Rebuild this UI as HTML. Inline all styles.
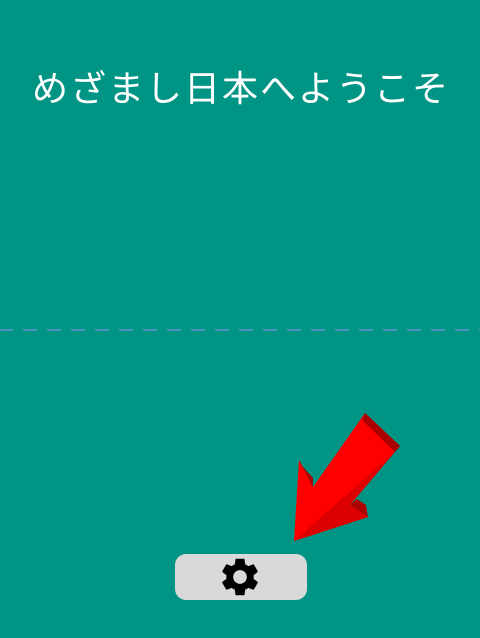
<!DOCTYPE html>
<html><head><meta charset="utf-8"><style>
html,body{margin:0;padding:0;}
body{width:480px;height:638px;background:#009485;position:relative;overflow:hidden;}
.t{position:absolute;left:0;width:480px;top:60px;text-align:center;color:#fff;font:36px "Liberation Sans","Noto Sans CJK JP",sans-serif;letter-spacing:2px;text-indent:2px;}
.dash{position:absolute;left:-1px;top:329px;width:490px;height:2px;background:repeating-linear-gradient(90deg,#4c90bc 0 14px,transparent 14px 24px);}
.btn{position:absolute;left:175px;top:554px;width:132px;height:46px;background:#d9d9d9;border-radius:11px;}
</style></head><body>
<div class="t">めざまし日本へようこそ</div>
<div class="dash"></div>
<svg style="position:absolute;left:0;top:0" width="480" height="638">
<polygon points="294,541 299,460 313,487 365,413 400,446 350,505 368,517" fill="#f00"/>
<polygon points="365,413 400,446 395,452 362,420" fill="#a00"/>
<polygon points="299,460 313,487 313,478 303,467" fill="#a00"/>
<polygon points="350,505 368,517 366,505 357,499" fill="#a00"/>
<polygon points="294,541 395,452 400,446 350,505 368,517" fill="#d00"/>
</svg>
<div class="btn"></div>
<svg style="position:absolute;left:221px;top:558px" width="38" height="38" viewBox="2 2 20 20"><path fill="#000" d="M19.14 12.94c.04-.3.06-.61.06-.94 0-.32-.02-.64-.07-.94l2.030-1.58a.49.49 0 0 0 .12-.61l-1.92-3.32a.49.49 0 0 0-.59-.22l-2.39.96c-.5-.38-1.03-.7-1.62-.94l-.36-2.540a.484.484 0 0 0-.48-.41h-3.84c-.24 0-.43.17-.47.41l-.36 2.54c-.59.24-1.13.57-1.62.94l-2.39-.96c-.22-.08-.47 0-.59.22L2.74 8.87c-.12.21-.08.47.12.61l2.03 1.58c-.05.3-.09.63-.09.94s.02.64.07.94l-2.03 1.58a.49.49 0 0 0-.12.61l1.92 3.32c.12.22.37.29.59.22l2.39-.96c.5.38 1.03.7 1.62.94l.36 2.54c.05.24.24.41.48.41h3.84c.24 0 .44-.17.47-.41l.36-2.54c.59-.24 1.13-.56 1.62-.94l2.39.96c.22.08.47 0 .59-.22l1.92-3.32c.12-.22.07-.47-.12-.61l-2.01-1.58zM12 15.6c-1.98 0-3.6-1.62-3.6-3.6s1.62-3.6 3.6-3.6 3.6 1.62 3.6 3.6-1.62 3.6-3.6 3.6z"/></svg>
</body></html>
